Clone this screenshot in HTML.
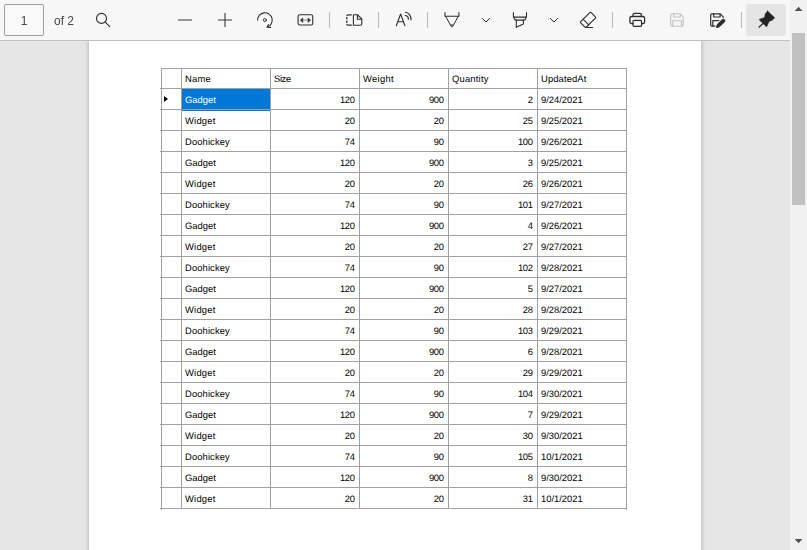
<!DOCTYPE html>
<html lang="en">
<head>
<meta charset="utf-8">
<title>PDF viewer</title>
<style>
html,body{margin:0;padding:0;}
body{width:807px;height:550px;overflow:hidden;position:relative;background:#e6e6e6;font-family:"Liberation Sans",sans-serif;}
#toolbar{position:absolute;left:0;top:0;width:790px;height:40px;background:#f7f7f7;border-bottom:1px solid #c0c0c0;z-index:5;}
#toolbar svg{position:absolute;left:0;top:0;}
#pagebox{position:absolute;left:4px;top:4px;width:38px;height:30px;border:1px solid #9e9e9e;border-radius:2px;background:#f9f9f9;}
.tbtxt{position:absolute;font-size:12px;line-height:14px;color:#444;white-space:nowrap;will-change:transform;}
#pin{position:absolute;left:746px;top:4px;width:40px;height:32px;border-radius:3px;background:#e5e5e5;}
#sb{position:absolute;left:790px;top:0;width:17px;height:550px;background:#f1f1f1;z-index:6;}
#thumb{position:absolute;left:2px;top:33px;width:13px;height:172px;background:#c1c1c1;}
#sb svg{position:absolute;left:0;top:0;}
#page{position:absolute;left:89px;top:41px;width:612px;height:520px;background:#fff;box-shadow:0 0 4px 1px rgba(0,0,0,.2);}
#grid{position:absolute;left:0;top:0;width:807px;height:550px;}
.hl,.vl{position:absolute;background:#a0a0a0;}
.hl{height:1px;}
.vl{width:1px;}
#sel{position:absolute;left:182px;top:89px;width:88px;height:22px;background:#0078d7;}
.c{position:absolute;font-size:9.4px;line-height:12px;height:12px;color:#000;white-space:nowrap;text-rendering:geometricPrecision;}
.r{text-align:right;}
.w{color:#fff;}
#tri{position:absolute;left:163.9px;top:95.9px;width:0;height:0;border-top:3.6px solid transparent;border-bottom:3.6px solid transparent;border-left:4.4px solid #000;}
</style>
</head>
<body>
<div id="page"></div>
<div id="grid">
<div id="sel"></div>
<div class="hl" style="left:161px;top:68px;width:466px"></div>
<div class="hl" style="left:160px;top:88px;width:467px"></div>
<div class="hl" style="left:160px;top:109px;width:467px"></div>
<div class="hl" style="left:160px;top:130px;width:467px"></div>
<div class="hl" style="left:160px;top:151px;width:467px"></div>
<div class="hl" style="left:160px;top:172px;width:467px"></div>
<div class="hl" style="left:160px;top:193px;width:467px"></div>
<div class="hl" style="left:160px;top:214px;width:467px"></div>
<div class="hl" style="left:160px;top:235px;width:467px"></div>
<div class="hl" style="left:160px;top:256px;width:467px"></div>
<div class="hl" style="left:160px;top:277px;width:467px"></div>
<div class="hl" style="left:160px;top:298px;width:467px"></div>
<div class="hl" style="left:160px;top:319px;width:467px"></div>
<div class="hl" style="left:160px;top:340px;width:467px"></div>
<div class="hl" style="left:160px;top:361px;width:467px"></div>
<div class="hl" style="left:160px;top:382px;width:467px"></div>
<div class="hl" style="left:160px;top:403px;width:467px"></div>
<div class="hl" style="left:160px;top:424px;width:467px"></div>
<div class="hl" style="left:160px;top:445px;width:467px"></div>
<div class="hl" style="left:160px;top:466px;width:467px"></div>
<div class="hl" style="left:160px;top:487px;width:467px"></div>
<div class="hl" style="left:160px;top:508px;width:467px"></div>
<div class="vl" style="left:161px;top:68px;height:442px"></div>
<div class="vl" style="left:181px;top:68px;height:441px"></div>
<div class="vl" style="left:270px;top:68px;height:441px"></div>
<div class="vl" style="left:359px;top:68px;height:441px"></div>
<div class="vl" style="left:448px;top:68px;height:441px"></div>
<div class="vl" style="left:537px;top:68px;height:441px"></div>
<div class="vl" style="left:626px;top:68px;height:442px"></div>
<div id="tri"></div>
<div class="c" style="left:185px;top:73px;letter-spacing:0.22px">Name</div>
<div class="c" style="left:274px;top:73px;letter-spacing:-0.37px">Size</div>
<div class="c" style="left:363px;top:73px;letter-spacing:0.3px">Weight</div>
<div class="c" style="left:452px;top:73px;letter-spacing:0.21px">Quantity</div>
<div class="c" style="left:541px;top:73px;letter-spacing:0.13px">UpdatedAt</div>
<div class="c w" style="left:185px;top:94px">Gadget</div>
<div class="c r" style="left:274.7px;width:80px;top:94px;letter-spacing:-0.3px">120</div>
<div class="c r" style="left:363.7px;width:80px;top:94px;letter-spacing:-0.3px">900</div>
<div class="c r" style="left:452.7px;width:80px;top:94px;letter-spacing:-0.3px">2</div>
<div class="c" style="left:541px;top:94px">9/24/2021</div>
<div class="c" style="left:185px;top:115px;letter-spacing:0.23px">Widget</div>
<div class="c r" style="left:274.7px;width:80px;top:115px;letter-spacing:-0.3px">20</div>
<div class="c r" style="left:363.7px;width:80px;top:115px;letter-spacing:-0.3px">20</div>
<div class="c r" style="left:452.7px;width:80px;top:115px;letter-spacing:-0.3px">25</div>
<div class="c" style="left:541px;top:115px">9/25/2021</div>
<div class="c" style="left:185px;top:136px;letter-spacing:0.12px">Doohickey</div>
<div class="c r" style="left:274.7px;width:80px;top:136px;letter-spacing:-0.3px">74</div>
<div class="c r" style="left:363.7px;width:80px;top:136px;letter-spacing:-0.3px">90</div>
<div class="c r" style="left:452.7px;width:80px;top:136px;letter-spacing:-0.3px">100</div>
<div class="c" style="left:541px;top:136px">9/26/2021</div>
<div class="c" style="left:185px;top:157px">Gadget</div>
<div class="c r" style="left:274.7px;width:80px;top:157px;letter-spacing:-0.3px">120</div>
<div class="c r" style="left:363.7px;width:80px;top:157px;letter-spacing:-0.3px">900</div>
<div class="c r" style="left:452.7px;width:80px;top:157px;letter-spacing:-0.3px">3</div>
<div class="c" style="left:541px;top:157px">9/25/2021</div>
<div class="c" style="left:185px;top:178px;letter-spacing:0.23px">Widget</div>
<div class="c r" style="left:274.7px;width:80px;top:178px;letter-spacing:-0.3px">20</div>
<div class="c r" style="left:363.7px;width:80px;top:178px;letter-spacing:-0.3px">20</div>
<div class="c r" style="left:452.7px;width:80px;top:178px;letter-spacing:-0.3px">26</div>
<div class="c" style="left:541px;top:178px">9/26/2021</div>
<div class="c" style="left:185px;top:199px;letter-spacing:0.12px">Doohickey</div>
<div class="c r" style="left:274.7px;width:80px;top:199px;letter-spacing:-0.3px">74</div>
<div class="c r" style="left:363.7px;width:80px;top:199px;letter-spacing:-0.3px">90</div>
<div class="c r" style="left:452.7px;width:80px;top:199px;letter-spacing:-0.3px">101</div>
<div class="c" style="left:541px;top:199px">9/27/2021</div>
<div class="c" style="left:185px;top:220px">Gadget</div>
<div class="c r" style="left:274.7px;width:80px;top:220px;letter-spacing:-0.3px">120</div>
<div class="c r" style="left:363.7px;width:80px;top:220px;letter-spacing:-0.3px">900</div>
<div class="c r" style="left:452.7px;width:80px;top:220px;letter-spacing:-0.3px">4</div>
<div class="c" style="left:541px;top:220px">9/26/2021</div>
<div class="c" style="left:185px;top:241px;letter-spacing:0.23px">Widget</div>
<div class="c r" style="left:274.7px;width:80px;top:241px;letter-spacing:-0.3px">20</div>
<div class="c r" style="left:363.7px;width:80px;top:241px;letter-spacing:-0.3px">20</div>
<div class="c r" style="left:452.7px;width:80px;top:241px;letter-spacing:-0.3px">27</div>
<div class="c" style="left:541px;top:241px">9/27/2021</div>
<div class="c" style="left:185px;top:262px;letter-spacing:0.12px">Doohickey</div>
<div class="c r" style="left:274.7px;width:80px;top:262px;letter-spacing:-0.3px">74</div>
<div class="c r" style="left:363.7px;width:80px;top:262px;letter-spacing:-0.3px">90</div>
<div class="c r" style="left:452.7px;width:80px;top:262px;letter-spacing:-0.3px">102</div>
<div class="c" style="left:541px;top:262px">9/28/2021</div>
<div class="c" style="left:185px;top:283px">Gadget</div>
<div class="c r" style="left:274.7px;width:80px;top:283px;letter-spacing:-0.3px">120</div>
<div class="c r" style="left:363.7px;width:80px;top:283px;letter-spacing:-0.3px">900</div>
<div class="c r" style="left:452.7px;width:80px;top:283px;letter-spacing:-0.3px">5</div>
<div class="c" style="left:541px;top:283px">9/27/2021</div>
<div class="c" style="left:185px;top:304px;letter-spacing:0.23px">Widget</div>
<div class="c r" style="left:274.7px;width:80px;top:304px;letter-spacing:-0.3px">20</div>
<div class="c r" style="left:363.7px;width:80px;top:304px;letter-spacing:-0.3px">20</div>
<div class="c r" style="left:452.7px;width:80px;top:304px;letter-spacing:-0.3px">28</div>
<div class="c" style="left:541px;top:304px">9/28/2021</div>
<div class="c" style="left:185px;top:325px;letter-spacing:0.12px">Doohickey</div>
<div class="c r" style="left:274.7px;width:80px;top:325px;letter-spacing:-0.3px">74</div>
<div class="c r" style="left:363.7px;width:80px;top:325px;letter-spacing:-0.3px">90</div>
<div class="c r" style="left:452.7px;width:80px;top:325px;letter-spacing:-0.3px">103</div>
<div class="c" style="left:541px;top:325px">9/29/2021</div>
<div class="c" style="left:185px;top:346px">Gadget</div>
<div class="c r" style="left:274.7px;width:80px;top:346px;letter-spacing:-0.3px">120</div>
<div class="c r" style="left:363.7px;width:80px;top:346px;letter-spacing:-0.3px">900</div>
<div class="c r" style="left:452.7px;width:80px;top:346px;letter-spacing:-0.3px">6</div>
<div class="c" style="left:541px;top:346px">9/28/2021</div>
<div class="c" style="left:185px;top:367px;letter-spacing:0.23px">Widget</div>
<div class="c r" style="left:274.7px;width:80px;top:367px;letter-spacing:-0.3px">20</div>
<div class="c r" style="left:363.7px;width:80px;top:367px;letter-spacing:-0.3px">20</div>
<div class="c r" style="left:452.7px;width:80px;top:367px;letter-spacing:-0.3px">29</div>
<div class="c" style="left:541px;top:367px">9/29/2021</div>
<div class="c" style="left:185px;top:388px;letter-spacing:0.12px">Doohickey</div>
<div class="c r" style="left:274.7px;width:80px;top:388px;letter-spacing:-0.3px">74</div>
<div class="c r" style="left:363.7px;width:80px;top:388px;letter-spacing:-0.3px">90</div>
<div class="c r" style="left:452.7px;width:80px;top:388px;letter-spacing:-0.3px">104</div>
<div class="c" style="left:541px;top:388px">9/30/2021</div>
<div class="c" style="left:185px;top:409px">Gadget</div>
<div class="c r" style="left:274.7px;width:80px;top:409px;letter-spacing:-0.3px">120</div>
<div class="c r" style="left:363.7px;width:80px;top:409px;letter-spacing:-0.3px">900</div>
<div class="c r" style="left:452.7px;width:80px;top:409px;letter-spacing:-0.3px">7</div>
<div class="c" style="left:541px;top:409px">9/29/2021</div>
<div class="c" style="left:185px;top:430px;letter-spacing:0.23px">Widget</div>
<div class="c r" style="left:274.7px;width:80px;top:430px;letter-spacing:-0.3px">20</div>
<div class="c r" style="left:363.7px;width:80px;top:430px;letter-spacing:-0.3px">20</div>
<div class="c r" style="left:452.7px;width:80px;top:430px;letter-spacing:-0.3px">30</div>
<div class="c" style="left:541px;top:430px">9/30/2021</div>
<div class="c" style="left:185px;top:451px;letter-spacing:0.12px">Doohickey</div>
<div class="c r" style="left:274.7px;width:80px;top:451px;letter-spacing:-0.3px">74</div>
<div class="c r" style="left:363.7px;width:80px;top:451px;letter-spacing:-0.3px">90</div>
<div class="c r" style="left:452.7px;width:80px;top:451px;letter-spacing:-0.3px">105</div>
<div class="c" style="left:541px;top:451px">10/1/2021</div>
<div class="c" style="left:185px;top:472px">Gadget</div>
<div class="c r" style="left:274.7px;width:80px;top:472px;letter-spacing:-0.3px">120</div>
<div class="c r" style="left:363.7px;width:80px;top:472px;letter-spacing:-0.3px">900</div>
<div class="c r" style="left:452.7px;width:80px;top:472px;letter-spacing:-0.3px">8</div>
<div class="c" style="left:541px;top:472px">9/30/2021</div>
<div class="c" style="left:185px;top:493px;letter-spacing:0.23px">Widget</div>
<div class="c r" style="left:274.7px;width:80px;top:493px;letter-spacing:-0.3px">20</div>
<div class="c r" style="left:363.7px;width:80px;top:493px;letter-spacing:-0.3px">20</div>
<div class="c r" style="left:452.7px;width:80px;top:493px;letter-spacing:-0.3px">31</div>
<div class="c" style="left:541px;top:493px">10/1/2021</div>
</div>
<div id="toolbar">
<div id="pagebox"></div>
<div id="pin"></div>
<div class="tbtxt" style="left:20px;top:14px;width:8px;text-align:center">1</div>
<div class="tbtxt" style="left:54.3px;top:14px">of 2</div>
<svg width="790" height="40" viewBox="0 0 790 40" fill="none" stroke="#2e2e2e" stroke-width="1.1" stroke-linecap="round" stroke-linejoin="round">
<!-- search -->
<circle cx="101.5" cy="18.4" r="5"/>
<path d="M105.2 22.1 L109.8 26.7"/>
<!-- minus / plus -->
<path d="M178 20 H192 M218 20 H232 M225 13 V27" stroke-linecap="butt" stroke="#3a3a3a"/>
<!-- rotate -->
<path d="M257.6 20.1 A7.3 7.3 0 1 1 267.3 27"/>
<path d="M270.6 27.4 L267.2 27.2 L268.5 24.5"/>
<circle cx="264.9" cy="20.1" r="1.5" stroke-width="0.9"/>
<!-- fit width -->
<rect x="298.05" y="14.75" width="14.7" height="10.3" rx="1.8"/>
<path d="M300.3 20.1 L302.9 18 V22.2 Z M310.5 20.1 L307.9 18 V22.2 Z" fill="#2e2e2e" stroke-width="0.5"/>
<path d="M302.9 20.1 H307.9" stroke-width="1" stroke="#909090" stroke-linecap="butt"/>
<!-- separators -->
<path d="M329.5 12 V28 M378.5 12 V28 M427.5 12 V28 M612.5 12 V28 M741.5 12 V28" stroke="#bcbcbc" stroke-width="1.1" stroke-linecap="butt"/>
<!-- page view -->
<path d="M353.4 14.8 H357.6 L361.8 19 V23.7 Q361.8 25.2 360.3 25.2 H353.4 Z"/>
<path d="M357.4 15 V19.2 H361.6"/>
<path d="M351.8 14.8 H348.6 Q346.8 14.8 346.8 16 M346.8 17 V19.2 M346.8 20.6 V22.9 M346.8 24 Q346.8 25.2 348.6 25.2 H351.8" stroke-linecap="butt" stroke-width="1.3"/>
<!-- read aloud -->
<path d="M396.3 25.8 L400.6 14 L404.9 25.8 M397.9 21.8 H403.3"/>
<path d="M405.3 15.5 A3.2 3.5 0 0 1 408.4 19.2 M405.3 12.3 A6 7 0 0 1 411 19.7" stroke-width="1.15"/>
<!-- draw -->
<path d="M445 12.2 V16.2 H458.9 V12.2" stroke-linecap="butt"/>
<path d="M445.7 16.4 L451.3 26.6 Q451.95 27.6 452.6 26.6 L458.2 16.4" stroke-width="1"/>
<path d="M450.2 24.4 H453.7 L452.5 26.7 Q451.95 27.5 451.4 26.7 Z" fill="#666" stroke="#666" stroke-width="0.5"/>
<!-- chevron -->
<path d="M482.4 18.5 L486 22 L489.6 18.5" stroke-width="1"/>
<!-- highlight -->
<path d="M513.4 12.2 V17.1 H526.5 V12.2" stroke-linecap="butt"/>
<path d="M514.3 17.2 Q514 20.1 516.3 20.1 H523.6 Q525.9 20.1 525.6 17.2"/>
<path d="M516.3 20.1 V27.3 L523.4 24 V20.1"/>
<path d="M550.3 18.5 L553.95 22 L557.6 18.5" stroke-width="1"/>
<!-- eraser -->
<path d="M580.7 21.6 Q580.1 22.2 580.7 22.8 L584.9 27 Q585.6 27.5 586.4 27 L595.3 18.2 Q595.9 17.5 595.3 16.8 L591.2 12.7 Q590.5 12.1 589.8 12.7 Z"/>
<path d="M583.3 19.4 L588.7 24.8 M585.8 27.5 H592.6"/>
<!-- print -->
<g stroke-width="1.3">
<path d="M633 16.4 V14.8 Q633 13.3 634.5 13.3 H639.9 Q641.4 13.3 641.4 14.8 V16.4"/>
<path d="M632.8 23.6 H631.6 Q629.9 23.6 629.9 21.9 V18.3 Q629.9 16.5 631.7 16.5 H642.8 Q644.6 16.5 644.6 18.3 V21.9 Q644.6 23.6 642.9 23.6 H641.8"/>
<rect x="633" y="20.4" width="8.6" height="6" rx="1.3"/>
</g>
<!-- save disabled -->
<g stroke="#c2c2c2">
<path d="M670.7 14.9 Q670.7 13.8 671.8 13.8 H680.2 L683.2 16.8 V25.1 Q683.2 26.2 682.1 26.2 H671.8 Q670.7 26.2 670.7 25.1 Z"/>
<path d="M673.7 14 V17 H680.3 V14 M672.8 26 V20.7 H681.4 V26"/>
</g>
<!-- save as -->
<g stroke-width="1.2">
<path d="M717 26.2 H711.8 Q710.7 26.2 710.7 25.1 V14.9 Q710.7 13.8 711.8 13.8 H720.2 L723.2 16.8 V20"/>
<path d="M713.7 14 V17 H720.1 V14 M712.8 26 V20.7 H721.4"/>
</g>
<path d="M716.6 27.3 L717.4 24.4 L722.2 19.7 Q723.3 18.8 724.4 19.8 Q725.3 20.9 724.4 21.9 L719.6 26.5 Z" fill="#f7f7f7" stroke="#f7f7f7" stroke-width="3"/>
<path d="M716.5 27.4 L717.3 24.4 L722.2 19.6 Q723.3 18.7 724.5 19.7 Q725.4 20.9 724.5 22 L719.6 26.6 Z" fill="#2a2a2a" stroke="#2a2a2a" stroke-width="0.9"/>
<!-- pin -->
<path d="M767.8 11.2 L774.45 17.45 Q774.7 18.2 774 18.6 L772 20.3 L769.1 21.5 L766.9 26.4 Q766.6 26.9 766.1 26.4 L759.4 20 Q759 19.5 759.6 19.3 L764.5 17.4 L765.2 14 L767 11.4 Q767.4 10.9 767.8 11.2 Z" fill="#242424" stroke="#242424" stroke-width="0.5"/>
<path d="M763.1 23.4 L759.1 27" stroke="#242424" stroke-width="1.2"/>
</svg>
</div>
<div id="sb"><div id="thumb"></div><svg width="17" height="550" viewBox="0 0 17 550"><path d="M4.7 11 L12.4 11 L8.55 6.8 Z M4.7 539 L12.4 539 L8.55 543.2 Z" fill="#505050"/></svg></div>
</body>
</html>
